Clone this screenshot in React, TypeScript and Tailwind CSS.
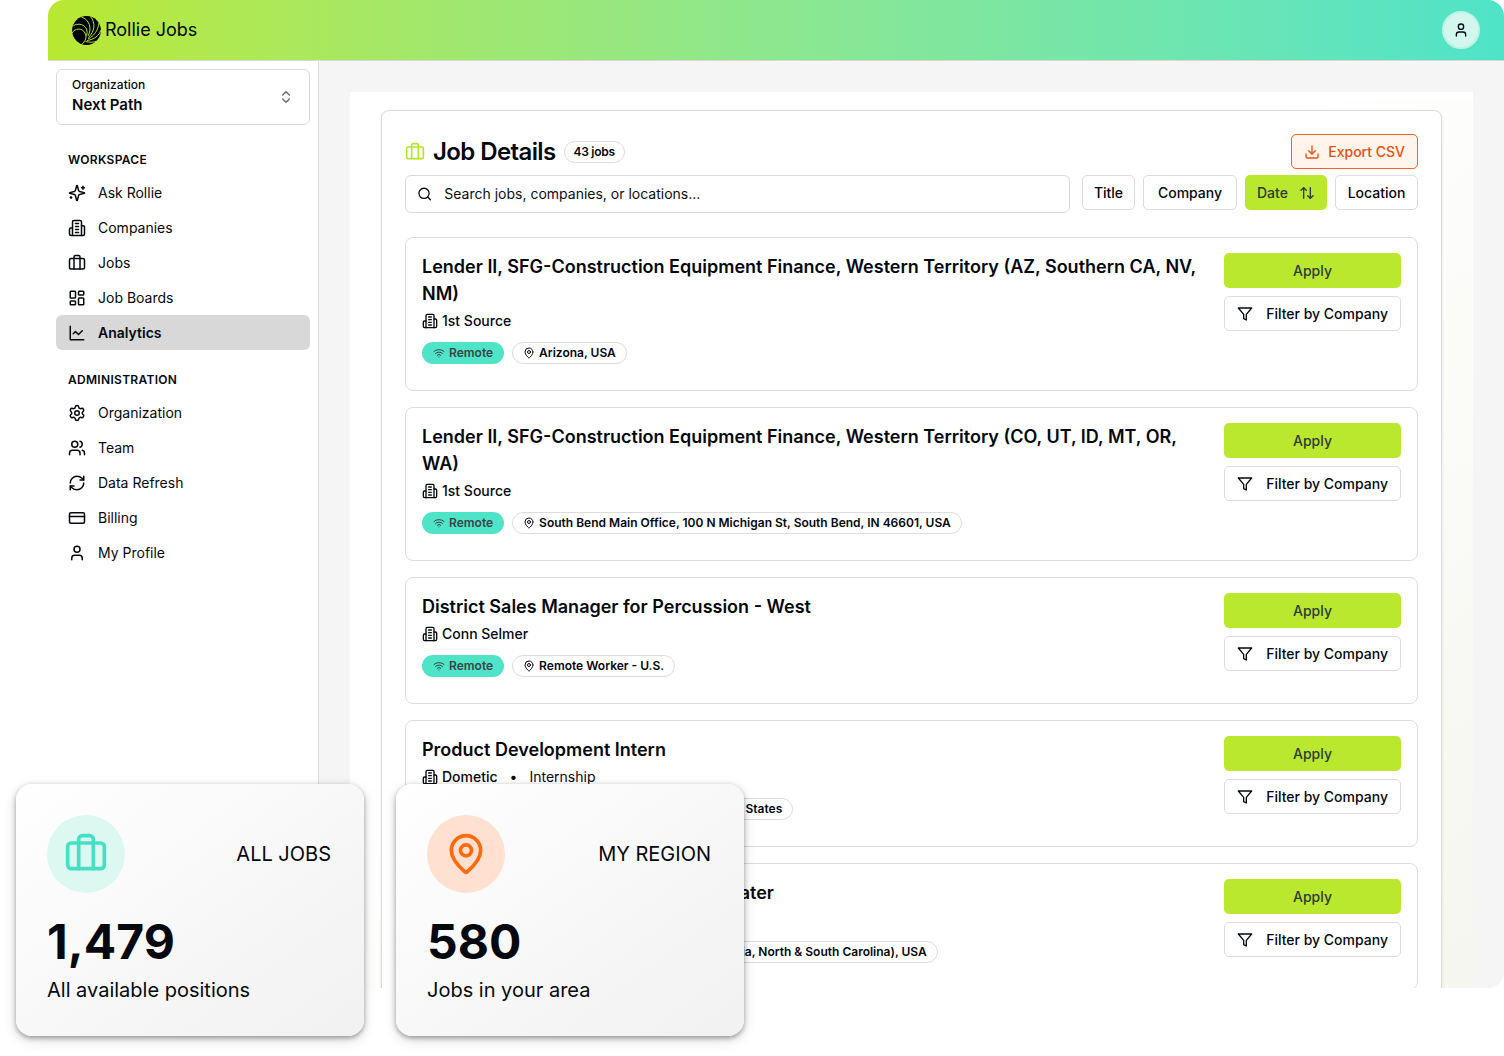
import type { ComponentType, ReactNode } from 'react'
import {
  ArrowUpDown,
  Briefcase,
  ChevronsUpDown,
  CreditCard,
  Download,
  LayoutDashboard,
  MapPin,
  RefreshCw,
  Search,
  Settings,
  User,
  Users,
  Wifi,
} from 'lucide-react'

interface IconProps {
  className?: string
}

interface NavItem {
  label: string
  icon: ComponentType<IconProps>
  active?: boolean
}

interface Job {
  title: string
  company: string
  type?: string
  location: string
}

function StrokeIcon({ className, children }: { className?: string; children: ReactNode }) {
  return (
    <svg
      className={className}
      viewBox="0 0 24 24"
      fill="none"
      stroke="currentColor"
      strokeWidth={2}
      strokeLinecap="round"
      strokeLinejoin="round"
      aria-hidden="true"
    >
      {children}
    </svg>
  )
}

function SparklesIcon({ className }: IconProps) {
  return (
    <StrokeIcon className={className}>
      <path d="M9.937 15.5A2 2 0 0 0 8.5 14.063l-6.135-1.582a.5.5 0 0 1 0-.962L8.5 9.936A2 2 0 0 0 9.937 8.5l1.582-6.135a.5.5 0 0 1 .963 0L14.063 8.5A2 2 0 0 0 15.5 9.937l6.135 1.581a.5.5 0 0 1 0 .964L15.5 14.063a2 2 0 0 0-1.437 1.437l-1.582 6.135a.5.5 0 0 1-.963 0z" />
      <path d="M20 3v4M22 5h-4M4 17v2M5 18H3" />
    </StrokeIcon>
  )
}

function BuildingIcon({ className }: IconProps) {
  return (
    <StrokeIcon className={className}>
      <path d="M6 22V4a2 2 0 0 1 2-2h8a2 2 0 0 1 2 2v18Z" />
      <path d="M6 12H4a2 2 0 0 0-2 2v6a2 2 0 0 0 2 2h2M18 9h2a2 2 0 0 1 2 2v9a2 2 0 0 1-2 2h-2" />
      <path d="M10 6h4M10 10h4M10 14h4M10 18h4" />
    </StrokeIcon>
  )
}

function LineChartIcon({ className }: IconProps) {
  return (
    <StrokeIcon className={className}>
      <path d="M3 3v18h18" />
      <path d="m19 9-5 5-4-4-3 3" />
    </StrokeIcon>
  )
}

function FilterIcon({ className }: IconProps) {
  return (
    <StrokeIcon className={className}>
      <path d="M22 3H2l8 9.46V19l4 2v-8.54L22 3z" />
    </StrokeIcon>
  )
}

function Logo() {
  return (
    <svg className="size-[29px]" viewBox="0 0 29 29" fill="none" aria-hidden="true">
      <circle cx="14.5" cy="14.5" r="14.4" fill="#000" />
      <g stroke="#b6e833" strokeWidth="1">
        <path d="M0 17C3 12 10 11.500 13 17C15 21 14 25 9 29" />
        <path d="M1.500 9.500C9 5.500 17.500 11 14.500 19.500" />
        <path d="M9.500 1C17 3.500 20.500 12 16 20" />
        <path d="M18.500 0.500C24 7 22.500 15.500 16.500 21.500" />
        <path d="M27 7C26 14.500 22 20 16 23" />
        <path d="M29 14C27 20 22 23.500 15 24.500" />
        <path d="M25.500 25C21.500 26.500 17 26.500 13.500 25.500" />
      </g>
    </svg>
  )
}

const WORKSPACE: NavItem[] = [
  { label: 'Ask Rollie', icon: SparklesIcon },
  { label: 'Companies', icon: BuildingIcon },
  { label: 'Jobs', icon: Briefcase },
  { label: 'Job Boards', icon: LayoutDashboard },
  { label: 'Analytics', icon: LineChartIcon, active: true },
]

const ADMINISTRATION: NavItem[] = [
  { label: 'Organization', icon: Settings },
  { label: 'Team', icon: Users },
  { label: 'Data Refresh', icon: RefreshCw },
  { label: 'Billing', icon: CreditCard },
  { label: 'My Profile', icon: User },
]

const JOBS: Job[] = [
  {
    title: 'Lender II, SFG-Construction Equipment Finance, Western Territory (AZ, Southern CA, NV, NM)',
    company: '1st Source',
    location: 'Arizona, USA',
  },
  {
    title: 'Lender II, SFG-Construction Equipment Finance, Western Territory (CO, UT, ID, MT, OR, WA)',
    company: '1st Source',
    location: 'South Bend Main Office, 100 N Michigan St, South Bend, IN 46601, USA',
  },
  {
    title: 'District Sales Manager for Percussion - West',
    company: 'Conn Selmer',
    location: 'Remote Worker - U.S.',
  },
  {
    title: 'Product Development Intern',
    company: 'Dometic',
    type: 'Internship',
    location: 'Lake Elkhart, Indiana 46516, United States',
  },
  {
    title: 'Outside Sales Representative, Rainwater',
    company: 'Dometic',
    location: 'Southeast Regions (Georgia, Virginia, North & South Carolina), USA',
  },
]

function NavSection({ title, items }: { title: string; items: NavItem[] }) {
  return (
    <section>
      <h2 className="flex h-[30px] items-center px-3 text-xs font-semibold tracking-wide">{title}</h2>
      <ul>
        {items.map(({ label, icon: Icon, active }) => (
          <li key={label}>
            <a
              href="#"
              className={`flex h-[35px] items-center gap-3 rounded-md px-3 text-sm ${
                active ? 'bg-[#d8d8d8] font-semibold' : ''
              }`}
            >
              <Icon className="size-[18px]" />
              {label}
            </a>
          </li>
        ))}
      </ul>
    </section>
  )
}

function Sidebar() {
  return (
    <aside className="w-[271px] shrink-0 border-r border-[#dcdcdc] bg-white p-2">
      <button className="flex h-14 w-full items-center justify-between rounded-md border border-[#d9d9d9] px-[15px] text-left">
        <span className="flex flex-col">
          <span className="text-xs leading-4 font-medium">Organization</span>
          <span className="text-[15px] leading-6 font-semibold">Next Path</span>
        </span>
        <ChevronsUpDown className="size-4 text-[#666]" />
      </button>
      <nav className="mt-5 flex flex-col gap-[15px]">
        <NavSection title="WORKSPACE" items={WORKSPACE} />
        <NavSection title="ADMINISTRATION" items={ADMINISTRATION} />
      </nav>
    </aside>
  )
}

function JobCard({ job }: { job: Job }) {
  return (
    <li className="flex items-start justify-between gap-4 rounded-lg border border-[#dcdcdc] bg-white px-4 pt-[15px] pb-[17px]">
      <div className="mb-[9px] min-w-0 flex-1">
        <h3 className="text-lg leading-[27px] font-semibold">{job.title}</h3>
        <p className="flex h-[27px] items-center gap-1 text-sm">
          <BuildingIcon className="size-4" />
          <span className="font-medium">{job.company}</span>
          {job.type && (
            <>
              <span className="mx-2">•</span>
              <span>{job.type}</span>
            </>
          )}
        </p>
        <div className="mt-2 flex gap-2 text-xs font-semibold">
          <span className="flex h-[22px] items-center gap-1 rounded-full bg-[#4fe3c8] px-[11px] text-[#3a4446]">
            <Wifi className="size-3" />
            Remote
          </span>
          <span className="flex h-[22px] items-center gap-1 rounded-full border border-[#dcdcdc] px-[10px]">
            <MapPin className="size-3" />
            {job.location}
          </span>
        </div>
      </div>
      <div className="flex w-[177px] shrink-0 flex-col gap-2 text-sm font-medium">
        <button className="h-[35px] rounded-[5px] bg-[#b9e82f] text-[#2e3a33]">Apply</button>
        <button className="flex h-[35px] items-center justify-between rounded-[5px] border border-[#dcdcdc] px-3">
          <FilterIcon className="size-4" />
          Filter by Company
        </button>
      </div>
    </li>
  )
}

function JobDetails() {
  return (
    <section className="rounded-lg border border-[#dcdcdc] bg-white px-[23px] pt-[23px] pb-6 shadow-sm">
      <div className="flex items-center justify-between">
        <div className="flex items-center gap-2">
          <Briefcase className="size-5 text-[#b4e62c]" />
          <h1 className="text-2xl leading-8 font-semibold tracking-tight">Job Details</h1>
          <span className="flex h-[22px] items-center rounded-full border border-[#dcdcdc] px-[9px] text-xs font-semibold tracking-tight">
            43 jobs
          </span>
        </div>
        <button className="flex h-[35px] items-center gap-2 rounded-[5px] border border-[#ee6526] bg-[#fff5ec] px-3 text-sm font-medium text-[#e84e0f]">
          <Download className="size-4" />
          Export CSV
        </button>
      </div>
      <div className="mt-[6px] flex items-start gap-3">
        <label className="flex h-[38px] flex-1 items-center gap-3 rounded-md border border-[#d9d9d9] px-[11px]">
          <Search className="size-4" />
          <input
            type="text"
            aria-label="Search jobs"
            placeholder="Search jobs, companies, or locations..."
            className="w-full bg-transparent text-sm outline-none placeholder:text-[#0a0d14]"
          />
        </label>
        <div className="flex gap-2 text-sm font-medium">
          <button className="h-[35px] w-[53px] rounded-[5px] border border-[#dcdcdc]">Title</button>
          <button className="h-[35px] w-[94px] rounded-[5px] border border-[#dcdcdc]">Company</button>
          <button className="flex h-[35px] w-[82px] items-center justify-between rounded-[5px] bg-[#b9e82f] px-3 text-[#2e3a33]">
            Date
            <ArrowUpDown className="size-4" />
          </button>
          <button className="h-[35px] w-[83px] rounded-[5px] border border-[#dcdcdc]">Location</button>
        </div>
      </div>
      <ul className="mt-6 flex flex-col gap-4">
        {JOBS.map((job) => (
          <JobCard key={job.title} job={job} />
        ))}
      </ul>
    </section>
  )
}

interface StatCardProps {
  label: string
  value: string
  description: string
  iconClassName: string
  icon: ComponentType<IconProps>
}

function StatCard({ label, value, description, iconClassName, icon: Icon }: StatCardProps) {
  return (
    <article className="w-[348px] rounded-2xl bg-linear-to-br from-white to-[#f1f1f1] pt-[31px] pr-[33px] pb-8 pl-[31px] shadow-[0_2px_5px_rgba(0,0,0,0.35),0_4px_14px_rgba(0,0,0,0.14)]">
      <div className="flex items-center justify-between">
        <span className={`flex size-[78px] items-center justify-center rounded-full ${iconClassName}`}>
          <Icon className="size-11" />
        </span>
        <span className="text-xl">{label}</span>
      </div>
      <p className="mt-[19px] text-5xl leading-[60px] font-bold">{value}</p>
      <p className="mt-1 text-xl leading-7">{description}</p>
    </article>
  )
}

export default function App() {
  return (
    <div className="relative flex h-screen flex-col overflow-hidden bg-white pb-[68px] pl-12 font-['Inter',sans-serif] text-[#05080f]">
      <div className="flex min-h-0 flex-1 flex-col overflow-hidden rounded-t-[16px] rounded-br-[16px] bg-[#f5f5f5]">
        <header className="flex h-[61px] shrink-0 items-center justify-between border-b border-[#d5d9cf] bg-linear-to-r from-[#b9e82f] to-[#4fe3c8] px-6">
          <a href="#" className="flex items-center gap-1 text-lg">
            <Logo />
            Rollie Jobs
          </a>
          <button
            aria-label="Account"
            className="flex size-[38px] items-center justify-center rounded-full border-2 border-[#bdf2e5] bg-[#d3f7ed]"
          >
            <User className="size-4" />
          </button>
        </header>
        <div className="flex min-h-0 flex-1">
          <Sidebar />
          <main className="min-w-0 flex-1 overflow-hidden px-[31px] pt-[31px]">
            <div className="bg-white pt-[7px]">
              <div className="bg-linear-to-br from-white from-40% to-[#f5f6ee] px-[31px] pt-[11px]">
                <JobDetails />
              </div>
            </div>
          </main>
        </div>
      </div>
      {/* Floating summary cards */}
      <div className="absolute bottom-5 left-4 flex gap-8">
        <StatCard
          label="ALL JOBS"
          value="1,479"
          description="All available positions"
          icon={Briefcase}
          iconClassName="bg-[#dcf8f1] text-[#45e0c4]"
        />
        <StatCard
          label="MY REGION"
          value="580"
          description="Jobs in your area"
          icon={MapPin}
          iconClassName="bg-[#ffe0d1] text-[#ff6a0a]"
        />
      </div>
    </div>
  )
}
